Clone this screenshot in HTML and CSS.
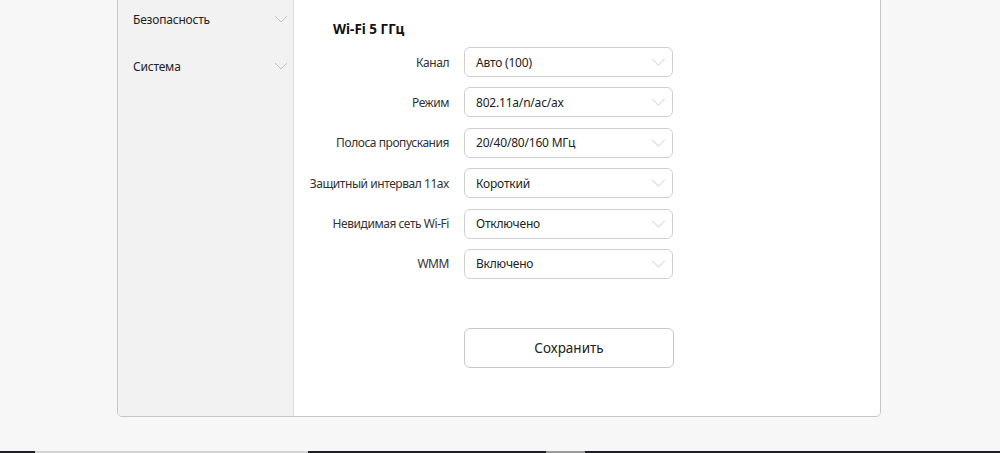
FILE: index.html
```html
<!DOCTYPE html>
<html lang="ru">
<head>
<meta charset="utf-8">
<title>Wi-Fi 5 ГГц</title>
<link rel="stylesheet" href="styles.css">
</head>
<body>
<div class="page">
  <div class="card">
    <nav class="sidebar">
      <div class="nav-item"><span>Безопасность</span><svg class="nav-chev" viewBox="0 0 14 8"><path d="M1 1l6 6 6-6"/></svg></div>
      <div class="nav-item"><span>Система</span><svg class="nav-chev" viewBox="0 0 14 8"><path d="M1 1l6 6 6-6"/></svg></div>
    </nav>
    <main class="content">
      <h2 class="title">Wi-Fi 5 ГГц</h2>
      <div class="form">
        <label class="lbl">Канал</label>
        <div class="select"><span>Авто (100)</span><svg class="chev" viewBox="0 0 16 9"><path d="M1 1l7 7 7-7"/></svg></div>
        <label class="lbl">Режим</label>
        <div class="select"><span>802.11a/n/ac/ax</span><svg class="chev" viewBox="0 0 16 9"><path d="M1 1l7 7 7-7"/></svg></div>
        <label class="lbl">Полоса пропускания</label>
        <div class="select"><span>20/40/80/160 МГц</span><svg class="chev" viewBox="0 0 16 9"><path d="M1 1l7 7 7-7"/></svg></div>
        <label class="lbl">Защитный интервал 11ax</label>
        <div class="select"><span>Короткий</span><svg class="chev" viewBox="0 0 16 9"><path d="M1 1l7 7 7-7"/></svg></div>
        <label class="lbl">Невидимая сеть Wi-Fi</label>
        <div class="select"><span>Отключено</span><svg class="chev" viewBox="0 0 16 9"><path d="M1 1l7 7 7-7"/></svg></div>
        <label class="lbl">WMM</label>
        <div class="select"><span>Включено</span><svg class="chev" viewBox="0 0 16 9"><path d="M1 1l7 7 7-7"/></svg></div>
      </div>
      <div class="actions">
        <button class="save">Сохранить</button>
      </div>
    </main>
  </div>
</div>
<div class="taskbar">
  <div class="seg seg-a"></div>
  <div class="seg seg-b"></div>
</div>
</body>
</html>
```
FILE: styles.css
```css
* { box-sizing: border-box; }

html, body {
  margin: 0;
  height: 453px;
  overflow: hidden;
}

body {
  background: #f7f7f7;
  font-family: "Noto Sans", "Open Sans", sans-serif;
  color: #222;
  display: flex;
  flex-direction: column;
}

.page {
  flex: 1;
  padding-left: 117px;
}

/* card continues above the visible area */
.card {
  width: 764px;
  height: 427px;
  margin-top: -10px;
  border: 1px solid #c6c6c6;
  border-radius: 5px;
  background: #fff;
  display: flex;
  overflow: hidden;
}

.sidebar {
  width: 176px;
  background: #f2f2f2;
  border-right: 1px solid #dcdcdc;
  padding-top: 17px;
  display: flex;
  flex-direction: column;
  gap: 25px;
}

.nav-item {
  height: 22px;
  display: flex;
  align-items: center;
  justify-content: space-between;
  padding: 0 5px 0 15px;
  font-size: 12px;
  letter-spacing: -0.2px;
  color: #222;
}

.nav-chev {
  width: 14px;
  height: 8px;
  fill: none;
  stroke: #c4c4c4;
  stroke-width: 1;
}

.content {
  flex: 1;
  padding-top: 27px;
}

.title {
  margin: 0 0 7px 39px;
  font-size: 13.5px;
  font-weight: 700;
  line-height: 22px;
  color: #111;
}

.form {
  display: grid;
  grid-template-columns: 155px 209px;
  column-gap: 15px;
  row-gap: 10.4px;
  align-items: center;
}

.lbl {
  text-align: right;
  font-size: 12px;
  letter-spacing: -0.45px;
  color: #333;
}

.select {
  height: 30px;
  border: 1px solid #cfcfcf;
  border-radius: 6px;
  display: flex;
  align-items: center;
  justify-content: space-between;
  padding: 0 6px 0 11px;
  font-size: 12px;
  letter-spacing: -0.2px;
  color: #222;
}

.chev {
  width: 15px;
  height: 8px;
  fill: none;
  stroke: #c4c4c4;
  stroke-width: 1;
}

.actions {
  padding: 49px 0 0 170px;
}

.save {
  width: 210px;
  height: 40px;
  background: #fff;
  border: 1px solid #c9c9c9;
  border-radius: 6px;
  font-family: inherit;
  font-size: 13.5px;
  color: #222;
}

.taskbar {
  height: 2px;
  background: #1f1f24;
  position: relative;
}

.seg {
  position: absolute;
  top: 0;
  height: 2px;
  background: #d4d4d4;
}

.seg-a { left: 35px; width: 273px; }
.seg-b { left: 546px; width: 39px; background: #9a9a9a; }
```
